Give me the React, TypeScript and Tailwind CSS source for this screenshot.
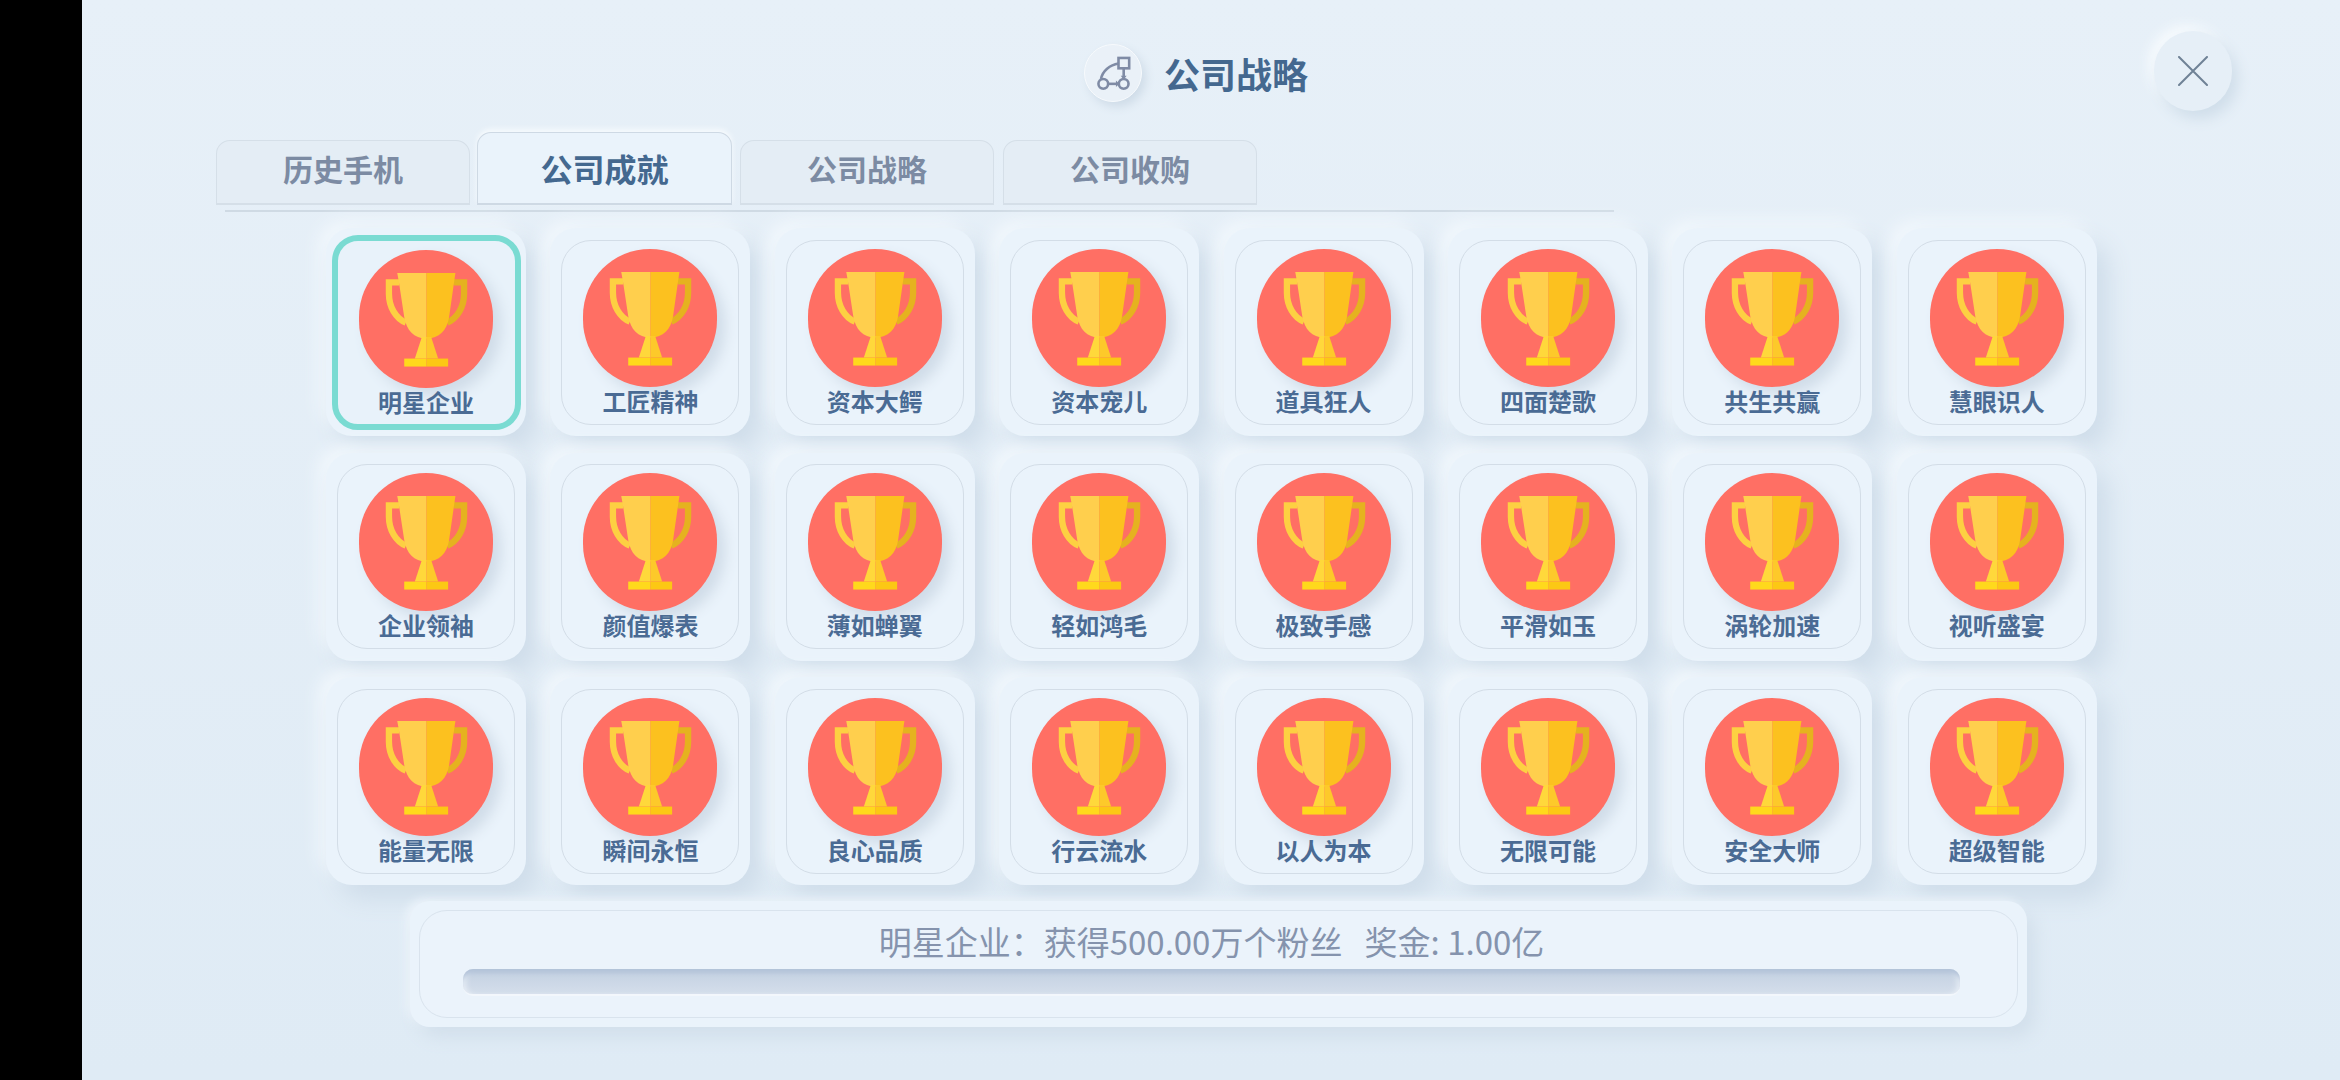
const achievements = [
  "明星企业", "工匠精神", "资本大鳄", "资本宠儿", "道具狂人", "四面楚歌", "共生共赢", "慧眼识人",
  "企业领袖", "颜值爆表", "薄如蝉翼", "轻如鸿毛", "极致手感", "平滑如玉", "涡轮加速", "视听盛宴",
  "能量无限", "瞬间永恒", "良心品质", "行云流水", "以人为本", "无限可能", "安全大师", "超级智能",
];

const tabs = ["历史手机", "公司成就", "公司战略", "公司收购"];

// trophy drawn on the badge, coords follow the badge box
function Trophy() {
  return (
    <svg viewBox="57 40 403 412" className="w-full h-full">
      <path d="M178 136H147V170C147 210 168 245 198 257" fill="none" stroke="#fdd042" strokeWidth="19" />
      <path d="M342 136H373V170C373 210 352 245 322 257" fill="none" stroke="#e5b21f" strokeWidth="19" />
      <path d="M172 108H260V305C222 305 200 280 193 240L177 135Z" fill="#ffcf4d" />
      <path d="M347 108H260V305C298 305 322 280 328 240L343 135Z" fill="#fcc11f" />
      <path d="M246 300H260V365H225Z" fill="#ffd83b" />
      <path d="M274 300H260V365H295Z" fill="#fdc92a" />
      <rect x="193" y="365" width="67" height="24" fill="#ffd91c" />
      <rect x="260" y="365" width="65" height="24" fill="#fcc814" />
    </svg>
  );
}

function StrategyIcon() {
  return (
    <svg viewBox="103 75 172 173" className="w-full h-full" fill="none" stroke="#7f8ba5" strokeWidth="8">
      <rect x="206" y="115" width="33" height="32" />
      <circle cx="159" cy="195" r="15" />
      <circle cx="222" cy="195" r="15" />
      <path d="M174 195H203" />
      <path d="M198 185L209 195L198 205" fill="#7f8ba5" stroke="none" />
      <path d="M222 147V176" />
      <path d="M213 170L222 182L231 170" fill="#7f8ba5" stroke="none" />
      <path d="M152 180C156 155 180 136 206 132" />
    </svg>
  );
}

function AchievementTile({ name, selected }: { name: string; selected: boolean }) {
  return (
    <div className="flex items-center justify-center w-[200px] h-[208px] rounded-[26px] bg-[#eaf3fb] shadow-[12px_14px_24px_#cfddea,-8px_-8px_16px_#f1f7fc]">
      <div
        className={
          selected
            ? "flex flex-col items-center w-[189px] h-[195px] pt-[9px] rounded-[26px] border-[6px] border-[#7adbd2] bg-[#e8f2fa]"
            : "flex flex-col items-center w-[178px] h-[185px] pt-[8px] rounded-[30px] border border-[#d3dde7] bg-[#eaf3fb]"
        }
      >
        <div className="w-[134px] h-[138px] shrink-0 rounded-full bg-[#ff6f64] shadow-[8px_8px_14px_#d0dce8]">
          <Trophy />
        </div>
        <div className="mt-[2px] text-[24px] leading-[24px] font-bold text-[#4a6b94]">{name}</div>
      </div>
    </div>
  );
}

export default function App() {
  return (
    <div className="flex w-[2340px] h-[1080px] overflow-hidden bg-black [font-family:'Noto_Sans_CJK_SC',sans-serif]">
      <div className="w-[82px] shrink-0" />
      <div className="flex-1 flex flex-col bg-gradient-to-b from-[#e7f0f8] to-[#dfebf5]">
        {/* header */}
        <div className="flex items-start h-[133px] pt-[31px]">
          <div className="flex items-center ml-[1002px] mt-[13px] gap-[22px]">
            <div className="w-[58px] h-[58px] rounded-full bg-[#eaf1f8] border border-[#f7fafd] shadow-[4px_5px_10px_#cfdce8]">
              <StrategyIcon />
            </div>
            <div className="text-[36px] leading-[50px] font-bold text-[#44688f]">公司战略</div>
          </div>
          <div className="ml-auto mr-[108px] flex items-center justify-center w-[78px] h-[80px] rounded-full bg-[#e6eff7] shadow-[6px_8px_14px_#d0deea,-6px_-6px_12px_#f6fafd]">
            <svg viewBox="0 0 30 30" className="w-[30px] h-[30px]" stroke="#6f8296" strokeWidth="2" strokeLinecap="round">
              <path d="M1 1L29 29M29 1L1 29" />
            </svg>
          </div>
        </div>

        {/* tabs */}
        <div className="flex items-end h-[73px] ml-[134px] gap-[9px] pb-[1px]">
          {tabs.map((tab, i) =>
            i === 1 ? (
              <div
                key={tab}
                className="flex items-center justify-center w-[255px] h-[73px] -ml-[2px] -mr-[1px] pb-[1px] rounded-t-[14px] border border-b-2 border-[#ced9e4] bg-[#eaf3fb] text-[32px] font-bold text-[#44688f] shadow-[0_-3px_5px_#f6fafd]"
              >
                {tab}
              </div>
            ) : (
              <div
                key={tab}
                className="flex items-center justify-center w-[254px] h-[65px] pb-[7px] rounded-t-[14px] border border-b-2 border-[#d5dfe8] bg-[#e4edf5] text-[30px] font-bold text-[#7c8ba3]"
              >
                {tab}
              </div>
            )
          )}
        </div>
        <div className="ml-[143px] mt-[4px] w-[1389px] h-[2px] bg-[#cfdae4]" />

        {/* achievements */}
        <div className="grid grid-cols-[repeat(8,200px)] auto-rows-[208px] gap-x-[24.4px] gap-y-[16.6px] ml-[244px] mt-[16px]">
          {achievements.map((name, i) => (
            <AchievementTile key={name} name={name} selected={i === 0} />
          ))}
        </div>

        {/* detail panel */}
        <div className="ml-[328px] mt-[16px] w-[1617px] h-[126px] p-[9px] rounded-[20px] bg-[#eaf3fb] shadow-[8px_10px_18px_#d2dfeb,-4px_-2px_10px_#eef5fb]">
          <div className="flex flex-col items-center h-full rounded-[28px] border border-[#d9e3ed] bg-[#ebf3fb]">
            <div className="mt-[7px] mr-[14px] h-[46px] text-[33px] leading-[46px] text-[#8593ad] whitespace-pre">明星企业：获得500.00万个粉丝   奖金: 1.00亿</div>
            <div className="mt-[5px] mr-[14px] w-[1497px] h-[27px] rounded-[10px] bg-gradient-to-b from-[#c3d0e1] to-[#d4deeb] border-b-2 border-[#f3f7fc] shadow-[inset_0_6px_4px_-2px_#b3c3d9,inset_6px_0_6px_-4px_#eef3f9,inset_-6px_0_6px_-4px_#eef3f9]" />
          </div>
        </div>
      </div>
    </div>
  );
}
